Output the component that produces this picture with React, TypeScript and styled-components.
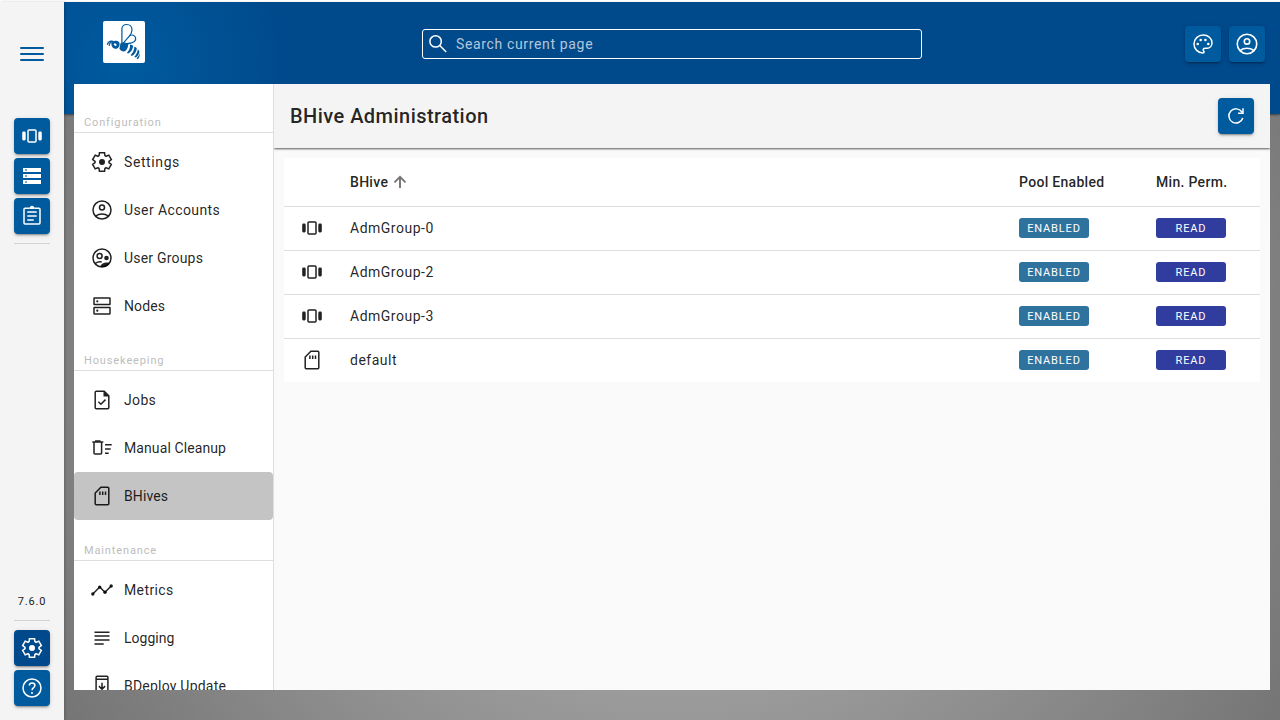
import React from "react";
import styled, { createGlobalStyle } from "styled-components";

const Global = createGlobalStyle`
  *, *::before, *::after { box-sizing: border-box; }
  body {
    margin: 0;
    background: #fff;
    font-family: Roboto, "Liberation Sans", sans-serif;
    color: rgba(0, 0, 0, 0.87);
    overflow: hidden;
  }
`;

const Svg = styled.svg`
  display: block;
  flex: none;
  fill: none;
  stroke: currentColor;
  stroke-width: 1.5;

  .solid {
    fill: currentColor;
    stroke: none;
  }
`;

const SHAPES = {
  carousel: (
    <>
      <rect x="8" y="6" width="8" height="12" rx="0.9" />
      <rect className="solid" x="2.2" y="7.6" width="3.5" height="8.8" rx="1.3" />
      <rect className="solid" x="18.3" y="7.6" width="3.5" height="8.8" rx="1.3" />
    </>
  ),
  storage: (
    <path
      className="solid"
      fillRule="evenodd"
      d="M3 4H21V8H3ZM5.300 5.300V6.700H6.700V5.300ZM3 10H21V14H3ZM5.300 11.300V12.700H6.700V11.300ZM3 16H21V20H3ZM5.300 17.300V18.700H6.700V17.300Z"
    />
  ),
  assignment: (
    <>
      <path d="M9.500 4.250H5A1 1 0 0 0 4 5.250V19A1 1 0 0 0 5 20H19A1 1 0 0 0 20 19V5.250A1 1 0 0 0 19 4.250H14.500" />
      <path d="M9.500 4.250C10.200 4.250 10.600 2.600 12 2.600S13.800 4.250 14.500 4.250ZM7.300 8.100H16.700M7.300 12.100H16.700M7.300 16.100H13.700" />
    </>
  ),
  settings: (
    <>
      <path
        transform="translate(12 12) scale(0.0233) translate(-480 480)"
        strokeWidth="64"
        d="m370-80-16-128q-13-5-24.5-12T307-235l-119 50L78-375l103-78q-1-7-1-13.5v-27q0-6.500 1-13.500L78-585l110-190 119 50q11-8 23-15t24-12l16-128h220l16 128q13 5 24.500 12t22.500 15l119-50 110 190-103 78q1 7 1 13.500v27q0 6.500-2 13.500l103 78-110 190-118-50q-11 8-23 15t-24 12L590-80H370Z"
      />
      <circle className="solid" cx="12" cy="12" r="3" />
    </>
  ),
  help: (
    <>
      <circle cx="12" cy="12" r="9" />
      <path d="M9.200 9.500C9.500 7.900 10.600 7.050 12.050 7.050C13.700 7.050 14.900 8.050 14.900 9.550C14.900 11.500 12 11.800 12 14.300" />
      <circle className="solid" cx="12" cy="16.900" r="1" />
    </>
  ),
  account: (
    <>
      <circle cx="12" cy="12" r="9" />
      <circle cx="12" cy="9.600" r="2.500" />
      <path d="M5.700 18C7.500 16.600 9.700 15.900 12 15.900S16.500 16.600 18.300 18" />
    </>
  ),
  groups: (
    <>
      <circle cx="12" cy="12" r="9" />
      <circle cx="9.600" cy="10" r="2.500" />
      <circle className="solid" cx="16.500" cy="12" r="2.300" />
      <path d="M5.400 17.300C7.300 16 9.300 15.600 11.700 16" />
      <path className="solid" d="M10 20.500C11.300 17.800 13.700 16.400 16.400 16.400C17.500 16.400 18.500 16.500 19.500 16.900C17.900 20 14 21.800 10 20.500Z" />
    </>
  ),
  dns: (
    <>
      <rect x="4" y="4.100" width="16" height="6.500" rx="0.300" />
      <rect x="4" y="13.400" width="16" height="6.500" rx="0.300" />
      <circle className="solid" cx="7.300" cy="7.350" r="1.100" />
      <circle className="solid" cx="7.300" cy="16.650" r="1.100" />
    </>
  ),
  task: (
    <>
      <path d="M14.200 3.250H6.200A1 1 0 0 0 5.200 4.250V19.750A1 1 0 0 0 6.200 20.750H17.800A1 1 0 0 0 18.800 19.750V7.850ZM8.400 13.800L10.900 16.200L15.500 11.600" />
      <path className="solid" d="M13.500 3.200V8.500H18.900Z" />
    </>
  ),
  sweep: (
    <path d="M2.300 6.100H13.300M5.800 6V5H9.800V6M4 6.100V17A1 1 0 0 0 5 18H10.600A1 1 0 0 0 11.600 17V6.100M15 8.700H21.700M15 13H20.700M15 17.200H18.700" />
  ),
  sdcard: (
    <path d="M10.900 3.250H17.800A1 1 0 0 1 18.800 4.250V19.750A1 1 0 0 1 17.800 20.750H6.200A1 1 0 0 1 5.200 19.750V8.950ZM9.900 7.500V11M12.700 7.500V11M15.500 7.500V11" />
  ),
  timeline: (
    <>
      <path d="M2.800 16L9.700 9L15 14.300L21.200 8" />
      <circle className="solid" cx="2.800" cy="16" r="1.700" />
      <circle className="solid" cx="9.700" cy="9.100" r="1.700" />
      <circle className="solid" cx="15" cy="14.200" r="1.700" />
      <circle className="solid" cx="21.200" cy="8" r="1.700" />
    </>
  ),
  subject: <path d="M4.500 6.200H19.500M4.500 10.100H19.500M4.500 14H19.500M4.500 17.900H13.700" />,
  update: (
    <path d="M7.100 2.150H16.900A1 1 0 0 1 17.900 3.150V20.900A1 1 0 0 1 16.900 21.900H7.100A1 1 0 0 1 6.100 20.900V3.150A1 1 0 0 1 7.100 2.150ZM6.100 5.200H17.900M12 8.800V15M8.900 12.100L12 15.200L15.100 12.100" />
  ),
  palette: (
    <>
      <path d="M12 21C7 21 3 17 3 12S7.100 3 12.200 3C17.100 3 21 6.400 21 11C21 14 18.800 16.200 16 16.200H14.100C12.900 16.200 12.200 17 12.200 17.900C12.200 18.900 13.100 19.200 13.100 20.100C13.100 20.700 12.700 21 12 21Z" />
      <circle className="solid" cx="6.700" cy="12" r="1.300" />
      <circle className="solid" cx="9.700" cy="8" r="1.300" />
      <circle className="solid" cx="14.400" cy="8" r="1.300" />
      <circle className="solid" cx="17.300" cy="12" r="1.300" />
    </>
  ),
  search: (
    <>
      <circle cx="9.600" cy="9.400" r="5.700" />
      <path d="M13.700 13.500L20.200 20" />
    </>
  ),
  refresh: <path d="M18.800 14A7.100 7.100 0 1 1 17.900 8M19 4.300V9.200H14.100" />,
  up: <path strokeWidth="1.900" d="M12 18V6.800M6.500 12.300L12 6.800L17.500 12.300" />,
};
type IconName = keyof typeof SHAPES;

const Icon = ({ name, size = 24 }: { name: IconName; size?: number }) => (
  <Svg width={size} height={size} viewBox="0 0 24 24">
    {SHAPES[name]}
  </Svg>
);

const Page = styled.div`
  display: flex;
  height: 720px;
  padding-top: 2px;
`;
const Rail = styled.aside`
  position: relative;
  z-index: 1;
  width: 64px;
  flex: none;
  display: flex;
  flex-direction: column;
  align-items: center;
  padding: 40px 14px 14px;
  background: #f4f4f4;
  color: #212121;
  box-shadow: 1px 0 3px rgba(0, 0, 0, 0.2);
`;
const MenuToggle = styled.button`
  display: flex;
  flex-direction: column;
  justify-content: space-between;
  width: 24px;
  height: 14px;
  margin: 5px 0 57px;
  padding: 0;
  border: 0;
  background: none;
`;
const MenuLine = styled.span`
  height: 2px;
  border-radius: 1px;
  background: #005a9e;
`;
const RailGroup = styled.div`
  display: flex;
  flex-direction: column;
  gap: 4px;
`;
const ToolButton = styled.button<{ $active?: boolean }>`
  display: flex;
  align-items: center;
  justify-content: center;
  width: 36px;
  height: 36px;
  padding: 0;
  border: 0;
  border-radius: 4px;
  color: #fff;
  background: ${(p) => (p.$active ? "#00498b" : "#005a9e")};
  box-shadow: 0 3px 1px -2px rgba(0, 0, 0, 0.2), 0 2px 2px 0 rgba(0, 0, 0, 0.14),
    0 1px 5px 0 rgba(0, 0, 0, 0.12);
`;
const RailRule = styled.hr`
  width: 36px;
  height: 1px;
  margin: 9px 0;
  border: 0;
  background: #d2d2d2;
`;
const Version = styled.span`
  margin-top: auto;
  margin-bottom: 1px;
  font-size: 11px;
  line-height: 16px;
  letter-spacing: 0.8px;
`;

const Stage = styled.main`
  flex: 1;
  min-width: 0;
  display: flex;
  flex-direction: column;
  background: radial-gradient(circle at 50% 50%, #bdbdbd 0%, #757575 100%);
`;
const Header = styled.header`
  flex: none;
  display: grid;
  grid-template-columns: 1fr 500px 1fr;
  align-items: center;
  height: 112px;
  padding: 0 15px 28px 39px;
  background: radial-gradient(circle at 60px 60px, #005a9e 0, #005a9e 10px, #00498b 165px);
  box-shadow: 0 1px 2px rgba(0, 0, 0, 0.5);
`;
const Logo = styled.div`
  width: 42px;
  height: 42px;
  margin-bottom: 4px;
  border-radius: 2px;
  background: #fff;
`;
const SearchBox = styled.label`
  display: flex;
  align-items: center;
  gap: 6px;
  height: 30px;
  margin-left: -12px;
  margin-right: 12px;
  padding-left: 3px;
  border: 1px solid #fff;
  border-radius: 3px;
  color: #fff;
`;
const SearchText = styled.span`
  font-size: 14px;
  line-height: 20px;
  letter-spacing: 0.65px;
  color: rgba(255, 255, 255, 0.7);
`;
const HeaderActions = styled.div`
  display: flex;
  justify-content: flex-end;
  gap: 8px;
`;

const Panel = styled.section`
  position: relative;
  display: flex;
  height: 606px;
  margin: -30px 10px 0;
  background: #fafafa;
  overflow: hidden;
`;
const SideNav = styled.nav`
  width: 200px;
  flex: none;
  padding-top: 28px;
  border-right: 1px solid #dedede;
  background: #fff;
`;
const NavSection = styled.div`
  margin-bottom: 20px;
`;
const NavHeading = styled.h2`
  height: 21px;
  margin: 0 0 5px;
  padding: 2px 10px 0;
  border-bottom: 1px solid #dedede;
  font-size: 11px;
  font-weight: 400;
  line-height: 17px;
  letter-spacing: 0.87px;
  color: #bdbdbd;
`;
const NavItem = styled.a<{ $active?: boolean; $tracking: number }>`
  display: flex;
  align-items: center;
  gap: 10px;
  height: 48px;
  padding-left: 16px;
  border-radius: 4px;
  background: ${(p) => (p.$active ? "#c4c4c4" : "transparent")};
  font-size: 14px;
  letter-spacing: ${(p) => p.$tracking}px;
  white-space: nowrap;
`;

const Content = styled.div`
  flex: 1;
  min-width: 0;
  display: flex;
  flex-direction: column;
  overflow: hidden;
`;
const TitleBar = styled.div`
  flex: none;
  display: flex;
  align-items: center;
  justify-content: space-between;
  height: 64px;
  padding: 0 16px;
  background: #f4f4f4;
  box-shadow: 0 1px 2px rgba(0, 0, 0, 0.65);
`;
const Title = styled.h1`
  margin: 0;
  font-size: 20px;
  font-weight: 500;
  letter-spacing: 0.46px;
`;
const Table = styled.div`
  margin: 10px;
  background: #fff;
`;
const Row = styled.div<{ $head?: boolean }>`
  display: grid;
  grid-template-columns: 66px 1fr 137px 104px;
  align-items: center;
  height: ${(p) => (p.$head ? 49 : 44)}px;
  padding-bottom: ${(p) => (p.$head ? 0 : 1)}px;
  border-bottom: 1px solid #dedede;
  font-size: 14px;
  font-weight: ${(p) => (p.$head ? 500 : 400)};
  letter-spacing: ${(p) => (p.$head ? 0.3 : 0.5)}px;

  &:last-child {
    height: 43px;
    border-bottom: 0;
  }
`;
const IconCell = styled.div`
  padding-left: 16px;
`;
const SortCell = styled.div`
  display: flex;
  align-items: center;
`;
const SortArrow = styled.span`
  color: #757575;
`;
const Badge = styled.span<{ $tone: "pool" | "perm" }>`
  display: block;
  width: 70px;
  height: 20px;
  border-radius: 3px;
  background: ${(p) => (p.$tone === "pool" ? "#2f729e" : "#303d9e")};
  color: #fff;
  font-size: 11px;
  line-height: 21px;
  letter-spacing: 0.85px;
  text-align: center;
`;

const BeeLogo = () => (
  <Logo>
    <svg width="42" height="42" viewBox="0 0 42 42" fill="#005a9e">
      <g fill="none" stroke="#005a9e" strokeWidth="1.200" strokeLinecap="round" strokeLinejoin="round">
        <path d="M18.900 22V8C18.900 5.200 21 3.500 23.700 3.500C26.800 3.500 29 5.800 29 8.800C29 11.200 28.200 12.800 26.600 14.800L20.200 22.200" />
        <path d="M26.600 14.600C30 12.800 33.600 15.600 32.400 19.200C31.400 22 27 22.600 21 22.800" />
        <path d="M4.400 23.400C5.200 20.800 7.400 19.800 10 20.400M6.200 24.400C6.500 22.200 8 20.800 10.300 20.700" />
      </g>
      <path
        fillRule="evenodd"
        d="M8.200 22.500C9.200 19.600 13.300 18.600 16.200 21.200C17.100 23.400 16.500 26.600 13.600 27.700C10.800 28.100 8.500 26.500 8.200 22.500ZM11.400 22.200A1.500 1.500 0 1 0 13.800 23.800Q13 22.200 11.400 22.200Z"
      />
      <path d="M17.500 22.300C20 21 23.500 21.400 25.300 23C25.200 26 24.100 28.500 22.200 30.300C19.200 30.900 16.800 29.400 16.500 27.300Z" />
      <path d="M27 23.400C28.400 23.600 29.300 24 30 24.700C30 28 28 31.300 25 32.500L23.900 31.700C26.200 29.600 27.200 26.800 27 23.400Z" />
      <path d="M31.400 25.500L33.800 27C33.600 30.500 31.700 33.700 28.800 35L27.600 33.900C30 31.800 31.300 29 31.400 25.500Z" />
      <path d="M34.800 28.200L36.400 30C36.300 32.800 34.900 35.400 32.700 36.600L31.300 35.700C33.400 33.600 34.500 31.300 34.800 28.200Z" />
      <path d="M36.700 31.800C37 34.400 36.400 36.800 34.800 38.300L33.500 37.300C35.300 35.800 36.300 34.200 36.700 31.800Z" />
    </svg>
  </Logo>
);

type NavEntry = { icon: IconName; label: string; tracking: number };
const NAV: { title: string; items: NavEntry[] }[] = [
  {
    title: "Configuration",
    items: [
      { icon: "settings", label: "Settings", tracking: 0.6 },
      { icon: "account", label: "User Accounts", tracking: 0.4 },
      { icon: "groups", label: "User Groups", tracking: 0.2 },
      { icon: "dns", label: "Nodes", tracking: 0.1 },
    ],
  },
  {
    title: "Housekeeping",
    items: [
      { icon: "task", label: "Jobs", tracking: 0.35 },
      { icon: "sweep", label: "Manual Cleanup", tracking: 0.1 },
      { icon: "sdcard", label: "BHives", tracking: 0.1 },
    ],
  },
  {
    title: "Maintenance",
    items: [
      { icon: "timeline", label: "Metrics", tracking: 0.4 },
      { icon: "subject", label: "Logging", tracking: 0 },
      { icon: "update", label: "BDeploy Update", tracking: 0.22 },
    ],
  },
];

const HIVES: { icon: IconName; name: string }[] = [
  { icon: "carousel", name: "AdmGroup-0" },
  { icon: "carousel", name: "AdmGroup-2" },
  { icon: "carousel", name: "AdmGroup-3" },
  { icon: "sdcard", name: "default" },
];

export default function App() {
  return (
    <>
      <Global />
      <Page>
        <Rail>
          <MenuToggle>
            <MenuLine />
            <MenuLine />
            <MenuLine />
          </MenuToggle>
          <RailGroup>
            <ToolButton><Icon name="carousel" /></ToolButton>
            <ToolButton><Icon name="storage" /></ToolButton>
            <ToolButton><Icon name="assignment" /></ToolButton>
          </RailGroup>
          <RailRule />
          <Version>7.6.0</Version>
          <RailRule />
          <RailGroup>
            <ToolButton $active><Icon name="settings" /></ToolButton>
            <ToolButton><Icon name="help" /></ToolButton>
          </RailGroup>
        </Rail>
        <Stage>
          <Header>
            <BeeLogo />
            <SearchBox>
              <Icon name="search" />
              <SearchText>Search current page</SearchText>
            </SearchBox>
            <HeaderActions>
              <ToolButton><Icon name="palette" /></ToolButton>
              <ToolButton><Icon name="account" size={26} /></ToolButton>
            </HeaderActions>
          </Header>
          <Panel>
            <SideNav>
              {NAV.map((section) => (
                <NavSection key={section.title}>
                  <NavHeading>{section.title}</NavHeading>
                  {section.items.map(({ icon, label, tracking }) => (
                    <NavItem key={label} $active={label === "BHives"} $tracking={tracking}>
                      <Icon name={icon} />
                      {label}
                    </NavItem>
                  ))}
                </NavSection>
              ))}
            </SideNav>
            <Content>
              <TitleBar>
                <Title>BHive Administration</Title>
                <ToolButton><Icon name="refresh" /></ToolButton>
              </TitleBar>
              <Table>
                <Row $head>
                  <span />
                  <SortCell>
                    BHive
                    <SortArrow><Icon name="up" /></SortArrow>
                  </SortCell>
                  <span>Pool Enabled</span>
                  <span>Min. Perm.</span>
                </Row>
                {HIVES.map(({ icon, name }) => (
                  <Row key={name}>
                    <IconCell><Icon name={icon} /></IconCell>
                    <span>{name}</span>
                    <Badge $tone="pool">ENABLED</Badge>
                    <Badge $tone="perm">READ</Badge>
                  </Row>
                ))}
              </Table>
            </Content>
          </Panel>
        </Stage>
      </Page>
    </>
  );
}
